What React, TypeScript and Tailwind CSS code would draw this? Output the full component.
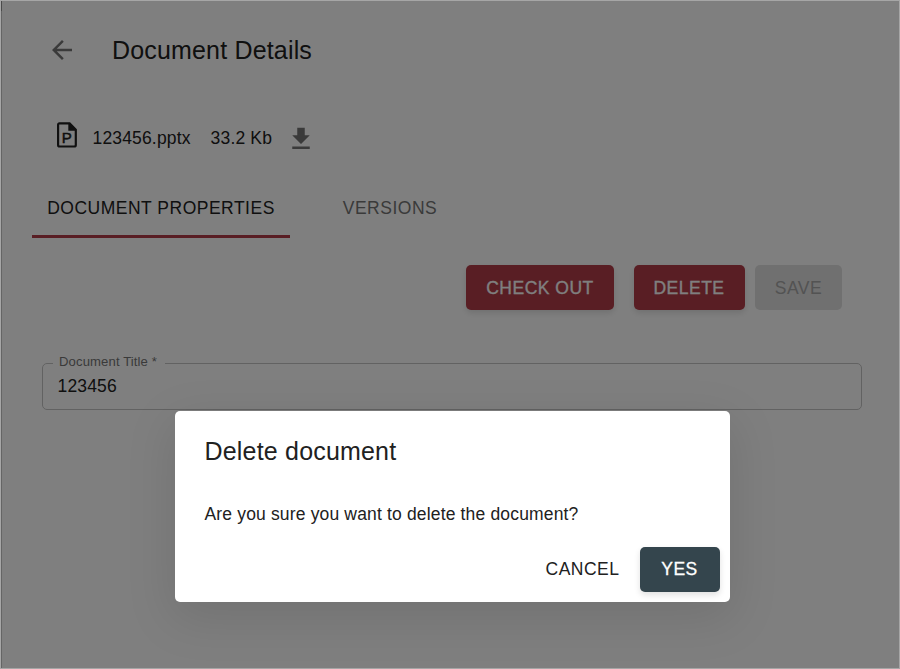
import React from "react";

const raised = "shadow-[0_3px_6px_0_rgba(0,0,0,0.12)] [-webkit-text-stroke:0.3px_white]";

function BackIcon() {
  return (
    <svg className="size-[30px] shrink-0" viewBox="0 0 24 24" fill="#757575">
      <path d="M20 11H7.83l5.59-5.59L12 4l-8 8 8 8 1.41-1.41L7.83 13H20v-2z" />
    </svg>
  );
}

function SlidesFileIcon() {
  return (
    <svg className="h-[26px] w-5 shrink-0" viewBox="0 0 20 26">
      <path d="M2.4 1.4H12.6L18.8 7.6V23a1.5 1.5 0 0 1-1.5 1.5H2.6A1.5 1.5 0 0 1 1.1 23V2.7A1.3 1.3 0 0 1 2.4 1.4Z" fill="none" stroke="#212121" strokeWidth="2.2" />
      <path d="M11.3 1.2H13l6 6v1.6h-7.7z" fill="#212121" />
      <text x="4.8" y="21.4" fontFamily="Liberation Sans, Arial, sans-serif" fontSize="15" fill="#212121" stroke="#212121" strokeWidth="0.5">P</text>
    </svg>
  );
}

function DownloadIcon() {
  return (
    <svg className="size-[30px] shrink-0" viewBox="0 0 24 24" fill="#757575">
      <path d="M19 9h-4V3H9v6H5l7 7 7-7zM5 18v2h14v-2H5z" />
    </svg>
  );
}

function DocumentPage() {
  return (
    <div className="flex h-full flex-col">
      <header className="flex h-[98px] items-center pl-[46px]">
        <BackIcon />
        <h1 className="ml-[35px] pt-[2px] text-[25px] tracking-[0.17px] whitespace-nowrap">Document Details</h1>
      </header>

      <div className="flex h-[77px] items-center pl-14 text-[17.5px] tracking-[0.16px]">
        <div className="pb-[5px]"><SlidesFileIcon /></div>
        <span className="ml-[15.5px] pt-[2px]">123456.pptx</span>
        <span className="ml-5 pt-[2px]">33.2 Kb</span>
        <span className="ml-[13.5px] pt-[3px]"><DownloadIcon /></span>
      </div>

      <nav className="flex h-[62px] pl-[31px] text-[17.5px] tracking-[0.5px]">
        <div className="flex w-[258px] items-center justify-center border-b-[3px] border-[#b23c48] pt-[5px]">DOCUMENT PROPERTIES</div>
        <div className="flex w-[200px] items-center justify-center pt-[2px] text-[#757575]">VERSIONS</div>
      </nav>

      <div className="mt-[27px] flex h-[45px] justify-end pr-[57px] text-[17.5px] font-medium tracking-[0.5px]">
        <button className={`w-[148px] rounded-[5px] bg-[#b23c48] pt-[2px] text-white ${raised}`}>CHECK OUT</button>
        <button className={`ml-5 w-[111px] rounded-[5px] bg-[#b23c48] pt-[2px] pr-px text-white ${raised}`}>DELETE</button>
        <button className="ml-[10px] w-[87px] rounded-[5px] bg-[#e0e0e0] pt-[2px] text-[#a6a6a6]">SAVE</button>
      </div>

      <fieldset className="mt-[43px] ml-[41px] h-[57px] w-[820px] rounded-[5px] border border-[#c4c4c4] pl-[14.5px]">
        <legend className="ml-[-4.5px] h-5 pr-[8px] pl-[6px] text-[13.1px] leading-[18px] tracking-[0.12px] text-[#757575]">Document Title *</legend>
        <div className="text-[17.5px] leading-[27px] tracking-[0.16px]">123456</div>
      </fieldset>
    </div>
  );
}

function DeleteDialog() {
  return (
    <section
      role="dialog"
      className="absolute top-[411px] left-[175px] flex h-[191px] w-[555px] flex-col rounded-[5px] bg-white shadow-[0_14px_48px_4px_rgba(0,0,0,0.1)]"
    >
      <h2 className="h-20 pl-[29.5px] text-[25px] leading-[80px] tracking-[0.19px]">Delete document</h2>
      <p className="h-[46px] pl-[29.5px] text-[17.5px] leading-[46px] tracking-[0.16px]">
        Are you sure you want to delete the document?
      </p>
      <div className="mt-[10px] flex h-[45px] justify-end pr-[10px] text-[17.5px] font-medium tracking-[0.5px]">
        <button className="w-[95px] font-normal">CANCEL</button>
        <button className={`ml-[10px] w-20 rounded-[5px] bg-[#34454d] pr-px text-white ${raised}`}>YES</button>
      </div>
    </section>
  );
}

export default function App() {
  return (
    <main className="relative h-[669px] w-[900px] overflow-hidden bg-white font-['Liberation_Sans',Arial,sans-serif] text-[#212121]">
      <div className="h-full border border-[#a6a6a6]">
        <DocumentPage />
      </div>
      <div className="absolute inset-px border-l border-black/20 bg-black/50">
        <div className="absolute top-0 -left-px h-[10px] w-px bg-black/25" />
      </div>
      <DeleteDialog />
    </main>
  );
}
